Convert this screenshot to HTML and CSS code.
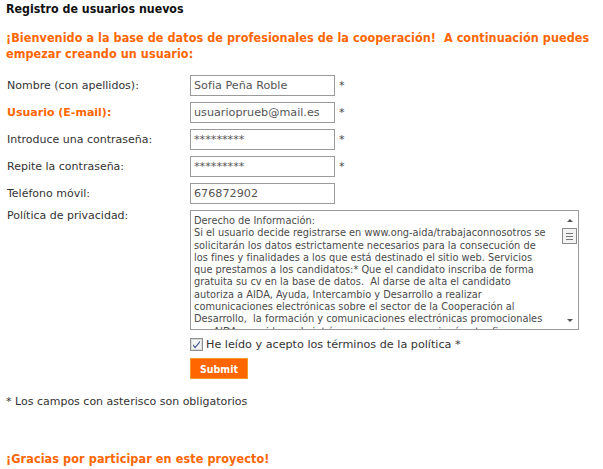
FILE: index.html
```html
<!DOCTYPE html>
<html lang="es">
<head>
<meta charset="utf-8">
<title>Registro de usuarios nuevos</title>
<link rel="stylesheet" href="styles.css">
</head>
<body>
<div class="page">
  <h1 class="title">Registro de usuarios nuevos</h1>
  <p class="intro">¡Bienvenido a la base de datos de profesionales de la cooperación!&nbsp; A continuación puedes empezar creando un usuario:</p>

  <form class="form">
    <label class="label">Nombre (con apellidos):</label>
    <div class="field"><input class="input" type="text" value="Sofia Peña Roble"><span class="req">*</span></div>

    <label class="label label-strong">Usuario (E-mail):</label>
    <div class="field"><input class="input" type="text" value="usuarioprueb@mail.es"><span class="req">*</span></div>

    <label class="label">Introduce una contraseña:</label>
    <div class="field"><input class="input" type="text" value="*********"><span class="req">*</span></div>

    <label class="label">Repite la contraseña:</label>
    <div class="field"><input class="input" type="text" value="*********"><span class="req">*</span></div>

    <label class="label">Teléfono móvil:</label>
    <div class="field"><input class="input" type="text" value="676872902"></div>

    <label class="label label-top">Política de privacidad:</label>
    <div class="policy">
      <div class="policy-text">Derecho de Información:<br>Si el usuario decide registrarse en www.ong-aida/trabajaconnosotros se<br>solicitarán los datos estrictamente necesarios para la consecución de<br>los fines y finalidades a los que está destinado el sitio web. Servicios<br>que prestamos a los candidatos:* Que el candidato inscriba de forma<br>gratuita su cv en la base de datos.&nbsp; Al darse de alta el candidato<br>autoriza a AIDA, Ayuda, Intercambio y Desarrollo a realizar<br>comunicaciones electrónicas sobre el sector de la Cooperación al<br>Desarrollo,&nbsp; la formación y comunicaciones electrónicas promocionales<br>por AIDA, considerando intrínsecamente que en ningún otro fin.</div>
      <div class="scrollbar">
        <span class="arrow arrow-up"></span>
        <span class="thumb"><span class="grip"></span></span>
        <span class="track"></span>
        <span class="arrow arrow-down"></span>
      </div>
    </div>

    <span class="spacer"></span>
    <div class="accept">
      <span class="checkbox"><svg width="13" height="13" viewBox="0 0 13 13"><rect x="0.5" y="0.5" width="12" height="12" fill="#f4f4f4" stroke="#8e8f8f"/><rect x="1.5" y="1.5" width="10" height="10" fill="none" stroke="#d8dcdf"/><path d="M3 6.2 L5.2 8.6 L10 2.8 L10 4.6 L5.2 10.4 L3 8 Z" fill="#4a5f97"/></svg></span>
      <span class="accept-text">He leído y acepto los términos de la política *</span>
    </div>

    <span class="spacer"></span>
    <div><button class="submit" type="button">Submit</button></div>
  </form>

  <p class="note">* Los campos con asterisco son obligatorios</p>
  <p class="thanks">¡Gracias por participar en este proyecto!</p>
</div>
</body>
</html>
```

FILE: styles.css
```css
html, body {
  margin: 0;
  padding: 0;
  background: #ffffff;
}

.page {
  padding: 1px 2px 0 6px;
  font-family: "DejaVu Sans", Verdana, sans-serif;
  font-size: 11px;
  color: #333333;
}

.title {
  margin: 0;
  font-family: "DejaVu Sans Condensed", "DejaVu Sans", sans-serif;
  font-size: 12.3px;
  font-weight: bold;
  color: #111111;
  line-height: 16px;
}

.intro {
  margin: 13px 0 0 0;
  font-family: "DejaVu Sans Condensed", "DejaVu Sans", sans-serif;
  font-size: 12.5px;
  font-weight: bold;
  letter-spacing: 0.06px;
  color: #ff6600;
  line-height: 16px;
}

.form {
  display: grid;
  grid-template-columns: 183px auto;
  row-gap: 6px;
  margin-top: 13px;
  padding-left: 1px;
}

.label {
  display: flex;
  align-items: center;
  height: 21px;
  color: #333333;
}

.label-strong {
  font-weight: bold;
  color: #ff6600;
}

.label-top {
  align-items: flex-start;
  height: auto;
  line-height: 12px;
}

.field {
  display: flex;
  align-items: center;
}

.input {
  box-sizing: border-box;
  width: 145px;
  height: 21px;
  margin: 0;
  padding: 0 3px;
  border: 1px solid #9a9a9a;
  font-family: "DejaVu Sans", Verdana, sans-serif;
  font-size: 11.2px;
  color: #555555;
  background: #ffffff;
  outline: none;
}

.req {
  margin-left: 4px;
  color: #444444;
  font-size: 11px;
}

.policy {
  display: flex;
  box-sizing: border-box;
  width: 389px;
  height: 120px;
  border: 1px solid #9a9a9a;
  overflow: hidden;
  background: #ffffff;
}

.policy-text {
  flex: 1;
  min-width: 0;
  padding: 4px 0 0 3px;
  font-size: 9.8px;
  line-height: 12.3px;
  color: #4a4a4a;
  white-space: nowrap;
  overflow: hidden;
}

.scrollbar {
  display: flex;
  flex-direction: column;
  flex: 0 0 17px;
  margin: 1px 0;
  background: #ffffff;
}

.arrow {
  position: relative;
  height: 16px;
}

.arrow::after {
  content: "";
  position: absolute;
  left: 6px;
  width: 0;
  height: 0;
  border-left: 3px solid transparent;
  border-right: 3px solid transparent;
}

.arrow-up::after {
  top: 7px;
  border-bottom: 3px solid #555555;
}

.arrow-down::after {
  top: 7px;
  border-top: 3px solid #555555;
}

.thumb {
  display: flex;
  align-items: center;
  justify-content: center;
  box-sizing: border-box;
  height: 16px;
  margin: 0 1px;
  border: 1px solid #8a8a8a;
  background: #f3f3f3;
}

.grip {
  width: 7px;
  height: 5px;
  border-top: 1px solid #777777;
  border-bottom: 1px solid #777777;
  background: linear-gradient(#777777, #777777) center / 100% 1px no-repeat;
}

.track {
  flex: 1;
}

.spacer {
  display: block;
}

.accept {
  display: flex;
  align-items: center;
  height: 16px;
}

.checkbox {
  display: flex;
  width: 13px;
  height: 13px;
  margin-right: 3px;
}

.accept-text {
  font-size: 11.2px;
  color: #333333;
}

.submit {
  box-sizing: border-box;
  width: 58px;
  height: 21px;
  margin: 0;
  padding: 0;
  border: 1px solid #f49a2a;
  background: #ff6600;
  color: #ffffff;
  font-family: "DejaVu Sans Condensed", "DejaVu Sans", sans-serif;
  font-size: 10.5px;
  font-weight: bold;
  cursor: pointer;
}

.note {
  margin: 16px 0 0 0;
  line-height: 14px;
  color: #333333;
}

.thanks {
  margin: 42px 0 0 0;
  font-family: "DejaVu Sans Condensed", "DejaVu Sans", sans-serif;
  font-size: 12.5px;
  font-weight: bold;
  letter-spacing: 0.1px;
  color: #ff6600;
  line-height: 16px;
}
```
